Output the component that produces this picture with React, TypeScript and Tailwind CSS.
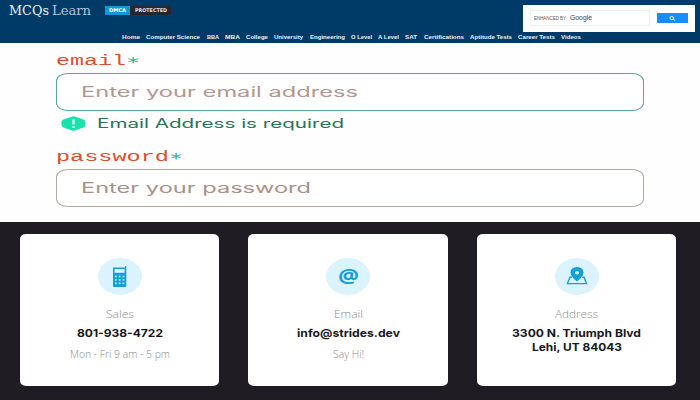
import { useLayoutEffect, useRef, useState } from 'react';
import type { ReactNode } from 'react';

// Text that is widened or narrowed to fill the width of its box.
function Stretch({ className, children }: { className: string; children: ReactNode }) {
  const box = useRef<HTMLSpanElement>(null);
  const text = useRef<HTMLSpanElement>(null);
  const [scale, setScale] = useState(1);
  useLayoutEffect(() => {
    if (box.current && text.current) {
      setScale(box.current.clientWidth / text.current.getBoundingClientRect().width);
    }
  }, []);
  return (
    <span ref={box} className={`block shrink-0 ${className}`}>
      <span ref={text} className="inline-block origin-left align-top whitespace-nowrap" style={{ transform: `scaleX(${scale})` }}>
        {children}
      </span>
    </span>
  );
}

const nav = [
  ['Home', 'w-[18px]'],
  ['Computer Science', 'w-[54px]'],
  ['BBA', 'w-[12px]'],
  ['MBA', 'w-[15px]'],
  ['College', 'w-[22px]'],
  ['University', 'w-[29px]'],
  ['Engineering', 'w-[35px]'],
  ['O Level', 'w-[21px]'],
  ['A Level', 'w-[21px]'],
  ['SAT', 'w-[12px]'],
  ['Certifications', 'w-[40px]'],
  ['Aptitude Tests', 'w-[42px]'],
  ['Career Tests', 'w-[37px]'],
  ['Videos', 'w-[20px]'],
];

function Header() {
  return (
    <header className="flex h-[43px] justify-between bg-[#003b68] font-['Liberation_Sans',sans-serif]">
      <div className="flex w-[523px] shrink-0 flex-col">
        <div className="flex h-[33px] items-start pl-[9px]">
          <div className="flex gap-[3px] pt-[4px] font-['DejaVu_Serif',serif] text-[12px] leading-[14px]">
            <Stretch className="w-[40px] text-[#eaf4fa]">MCQs</Stretch>
            <Stretch className="w-[39px] text-[#a9c6da]">Learn</Stretch>
          </div>
          <div className="mt-[6px] ml-[14px] flex h-[9px] font-['DejaVu_Sans',sans-serif] text-[5px] leading-[9px] font-bold text-white">
            <div className="flex w-[25px] justify-center bg-[#1497d8]">
              <Stretch className="w-[17px]">DMCA</Stretch>
            </div>
            <div className="flex w-[41px] justify-center bg-[#25282c] text-[#e5e5e5]">
              <Stretch className="w-[32px]">PROTECTED</Stretch>
            </div>
          </div>
        </div>
        <nav className="flex h-[10px] gap-[6.27px] pl-[122px] text-[6px] leading-[9px] font-bold text-[#e8f1f7]">
          {nav.map(([label, width]) => (
            <Stretch key={label} className={width}>{label}</Stretch>
          ))}
        </nav>
      </div>
      <div className="mt-[5px] mr-[5px] flex h-[27px] w-[172px] items-start bg-white pl-[7px]">
        <div className="mt-[5px] flex h-[16px] w-[120px] items-center border border-[#f0f0f0] pl-[3px] text-[#555]">
          <Stretch className="w-[32px] text-[5px] leading-[8px]">ENHANCED BY</Stretch>
          <Stretch className="ml-[4px] w-[22px] text-[7px] leading-[8px] text-[#444]">Google</Stretch>
        </div>
        <div className="mt-[8px] ml-[7px] flex h-[10px] w-[31px] items-center justify-center bg-[#1a8cfa]">
          <svg width="7" height="5" viewBox="0 0 7 5" fill="none" stroke="white" strokeWidth="0.9">
            <ellipse cx="2.8" cy="2" rx="1.9" ry="1.5" />
            <path d="M4.2 3.1L6.2 4.7" />
          </svg>
        </div>
      </div>
    </header>
  );
}

function Label({ text, width }: { text: string; width: string }) {
  return (
    <div className="flex h-[16px] pt-[1px] font-['Liberation_Mono',monospace] text-[14px] leading-[16px] text-[#dc4f2d]">
      <Stretch className={width}>{text}</Stretch>
      <span className="mt-[1px] font-['DejaVu_Sans_Mono',monospace] text-[#25b58c]">
        <Stretch className="w-[14px]">*</Stretch>
      </span>
    </div>
  );
}

function Form() {
  return (
    <form className="flex h-[179px] flex-col bg-[#fefefe] pt-[9px] pl-[56px] font-['Inter',sans-serif]">
      <Label text="email" width="w-[70px]" />
      <div className="mt-[5px] flex h-[38px] w-[588px] items-center rounded-[12px/8px] border border-[#56a79b] bg-white pl-[24px] text-[14px] leading-[16px] text-[#b2968f]">
        <Stretch className="w-[277px]">Enter your email address</Stretch>
      </div>
      <div className="mt-[4px] flex h-[17px] items-center pl-[5px]">
        <svg width="25" height="15" viewBox="0 0 25 15">
          <path d="M10.5 .7Q12.5-.3 14.5 .7L22.5 3.4Q24.5 4.2 24.5 5.4V9.6Q24.5 10.8 22.5 11.6L14.5 14.3Q12.5 15.3 10.5 14.3L2.5 11.6Q.5 10.8 .5 9.6V5.4Q.5 4.2 2.5 3.4Z" fill="#18e3ae" />
          <path d="M12.5 3.2V8.4M12.5 10.2V12" stroke="#e6fff8" strokeWidth="2.4" />
        </svg>
        <Stretch className="ml-[11px] w-[247px] text-[12.5px] leading-[15px] text-[#2b7358]">Email Address is required</Stretch>
      </div>
      <div className="mt-[16px]">
        <Label text="password" width="w-[113px]" />
      </div>
      <div className="mt-[5px] flex h-[38px] w-[588px] items-center rounded-[12px/8px] border border-[#b3a9a6] bg-white pl-[24px] text-[14px] leading-[16px] text-[#a99089]">
        <Stretch className="w-[230px]">Enter your password</Stretch>
      </div>
    </form>
  );
}

function Calculator() {
  return (
    <svg width="16" height="21" viewBox="0 0 16 21" fill="#159fda">
      <path d="M1 1.5H13V0H14.3V20Q14.3 21 13 21H2Q1 21 1 20Z" />
      <path d="M2.6 3H12.6V6.8H2.6Z" fill="#dff5fc" />
      <g fill="#bce9f8">
        {[9.6, 13, 16.4].map((y) =>
          [3, 6.8, 10.6].map((x) => <rect key={`${x}-${y}`} x={x} y={y} width="1.7" height="1.7" />),
        )}
      </g>
    </svg>
  );
}

function MapPin() {
  return (
    <svg width="22" height="18" viewBox="0 0 22 18">
      <path d="M5.8 10.2H4L1.4 16.6H20.6L18 10.2H16.2" fill="none" stroke="#159fda" strokeWidth="1.4" />
      <path d="M11 14.5Q4.5 9.5 4.5 5.5Q4.8 .3 11 .1Q17.2 .3 17.5 5.5Q17.5 9.5 11 14.5Z" fill="#159fda" />
      <ellipse cx="11" cy="5.8" rx="2.1" ry="1.7" fill="#dff5fc" />
    </svg>
  );
}

function Card({ icon, label, labelWidth, children }: { icon: ReactNode; label: string; labelWidth: string; children: ReactNode }) {
  return (
    <section className="flex h-[152px] w-[199.4px] flex-col items-center rounded-[6px/5px] bg-white pt-[24px] pl-[0.6px]">
      <div className="flex h-[37px] w-[44px] items-center justify-center rounded-[50%] bg-[#dbf3fc]">{icon}</div>
      <div className="mt-[11px] font-['Open_Sans',sans-serif] text-[11px] leading-[15px] font-light text-[#8b8b8b]">
        <Stretch className={labelWidth}>{label}</Stretch>
      </div>
      <div className="mt-[5px] flex flex-col items-center font-['Inter',sans-serif] text-[11px] leading-[14px] font-bold text-[#191820]">
        {children}
      </div>
    </section>
  );
}

function Note({ text, width }: { text: string; width: string }) {
  return (
    <div className="mt-[6px] font-['Open_Sans',sans-serif] leading-[15px] font-light text-[#8b8b8b]">
      <Stretch className={width}>{text}</Stretch>
    </div>
  );
}

export default function App() {
  return (
    <div className="h-[400px] w-[700px] overflow-hidden bg-white">
      <Header />
      <Form />
      <main className="flex h-[178px] gap-[29px] bg-[#201c23] pt-[11.5px] pl-[19.9px]">
        <Card icon={<Calculator />} label="Sales" labelWidth="w-[28px]">
          <Stretch className="w-[86px]">801-938-4722</Stretch>
          <Note text="Mon - Fri 9 am - 5 pm" width="w-[100px]" />
        </Card>
        <Card
          icon={
            <span className="font-['Open_Sans',sans-serif] text-[19.5px] leading-[18px] font-bold text-[#159fda]">
              <Stretch className="w-[21px]">@</Stretch>
            </span>
          }
          label="Email"
          labelWidth="w-[29px]"
        >
          <Stretch className="w-[103px]">info@strides.dev</Stretch>
          <Note text="Say Hi!" width="w-[31px]" />
        </Card>
        <Card icon={<MapPin />} label="Address" labelWidth="w-[43px]">
          <Stretch className="w-[129px]">3300 N. Triumph Blvd</Stretch>
          <Stretch className="w-[90px]">Lehi, UT 84043</Stretch>
        </Card>
      </main>
    </div>
  );
}
